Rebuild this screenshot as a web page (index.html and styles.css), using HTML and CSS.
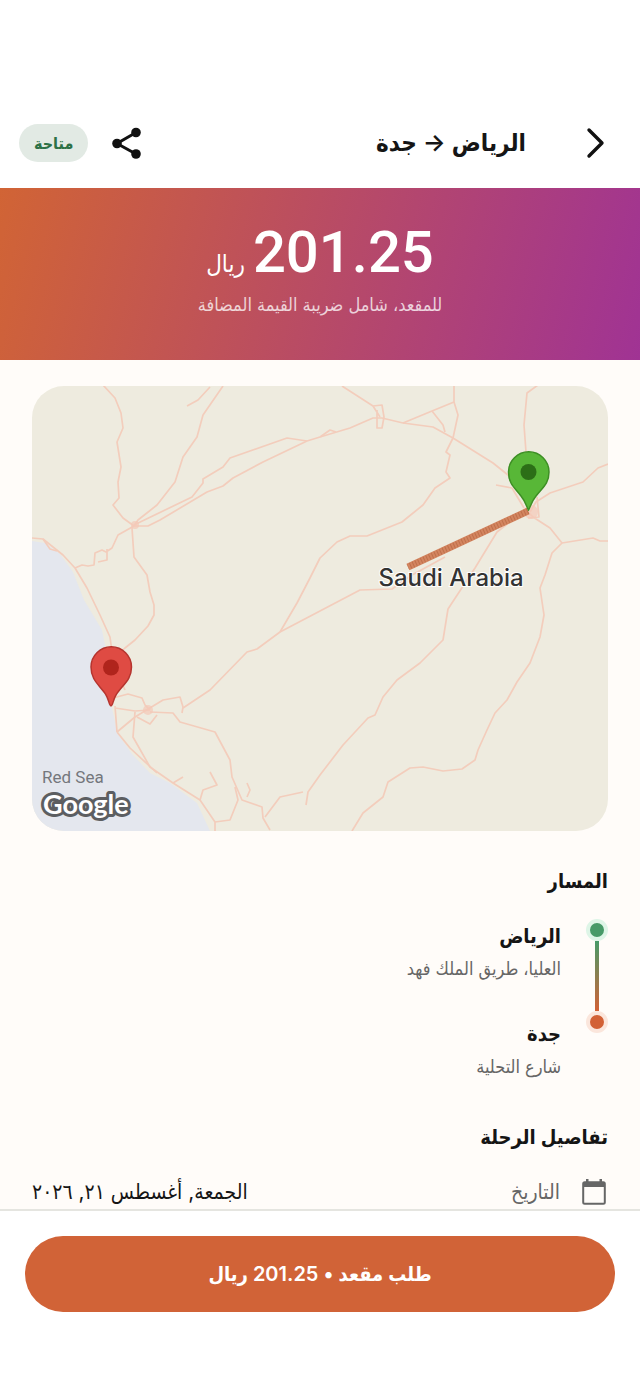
FILE: index.html
```html
<!DOCTYPE html>
<html lang="ar" dir="rtl">

<head>
    <meta charset="utf-8">
    <meta name="viewport" content="width=device-width, initial-scale=1">
    <title>الرياض → جدة</title>
    <link rel="stylesheet" href="styles.css">
</head>

<body>
    <header class="topbar">
        <button class="iconBtn" type="button" aria-label="رجوع">
            <svg width="36" height="36" viewBox="0 0 36 36"><path d="M11 5l13 13-13 13" fill="none" stroke="#111" stroke-width="3.400" stroke-linecap="round" stroke-linejoin="round"/></svg>
        </button>
        <h1 class="title">الرياض → جدة</h1>
        <button class="iconBtn" type="button" aria-label="مشاركة">
            <svg width="36" height="36" viewBox="0 0 36 36">
                <path d="M28 7.500L9 18.500l19 10.500" fill="none" stroke="#111" stroke-width="3"/>
                <circle cx="28" cy="7.500" r="4.800" fill="#111"/>
                <circle cx="9" cy="18.500" r="4.800" fill="#111"/>
                <circle cx="28" cy="29" r="4.800" fill="#111"/>
            </svg>
        </button>
        <span class="badge">متاحة</span>
    </header>

    <main class="content">
        <section class="price">
            <div class="amount"><span class="number">201.25</span><span class="currency">ريال</span></div>
            <div class="priceNote">للمقعد، شامل ضريبة القيمة المضافة</div>
        </section>

        <div class="details">
            <svg class="map" viewBox="32 386 576 445" preserveAspectRatio="xMidYMid slice" direction="ltr">
                <rect x="32" y="386" width="576" height="445" fill="#eeebdf"/>
                <path d="M32 541L45 543 60 554 73 572 84 600 102 630 108 660 110 700 114 717 117 733 132 754 150 773 170 783 197 803 210 831H32z" fill="#e4e7ee"/>

                <!-- roads -->
                <g fill="none" stroke="#f3cdbc" stroke-width="1.700" stroke-linejoin="round">
                    <path d="M103 385L115 398 121 413 123 428 117 442 121 467 118 482 119 498 113 505 123 518 134 526"/>
                    <path d="M210 387L198 400 187 406"/>
                    <path d="M223 386L203 415 197 437 183 457 175 482 157 505 138 520 134 526"/>
                    <path d="M320 437L307 441 287 438 230 458 223 467 203 479 203 483 192 497 134 525"/>
                    <path d="M307 441L263 462 233 478 223 486 207 492 160 520 148 526 134 526"/>
                    <path d="M134 526L118 535 112 548 106 552 102 550 95 553 94 565 88 566 82 565 75 568M107 549V560L98 562"/>
                    <path d="M132 528L134 557 147 575 150 592 154 605 154 615 148 626 135 640 125 648 112 660"/>
                    <path d="M32 538L43 539 63 555 75 568 87 588 100 615 110 637 114 666 125 690"/>
                    <path d="M43 539L50 549 57 551"/>
                    <path d="M113 698L128 694 142 698 145 705 150 710M115 706L117 732M115 708L135 711 150 710"/>
                    <path d="M117 732L135 717 163 700 180 697 183 707 182 713"/>
                    <path d="M183 708L210 690 247 652 257 649 280 632 320 611 360 590 392 589 412 575 445 557"/>
                    <path d="M280 632L297 603 310 578 320 558 337 542 350 536 367 536 402 522 423 505 435 488 450 478 446 472 450 455 446 452 453 438 458 415 454 402 454 385"/>
                    <path d="M320 437L350 428 373 418 382 418 403 423 433 427 453 438 477 453 493 463 508 475 526 500"/>
                    <path d="M320 437L330 430 336 432"/>
                    <path d="M342 386L373 406 380 417M373 406L382 405 384 417 382 428 377 428 377 410"/>
                    <path d="M403 423L432 411 454 402M432 411L443 425 445 432"/>
                    <path d="M538 385L527 393 524 425 526 452M496 485L512 488 524 508"/>
                    <path d="M608 464L598 468 583 482 550 493 536 502 530 512"/>
                    <path d="M526 510L533 517 550 528 562 543 593 538 600 541 608 541M537 497L539 517 528 518"/>
                    <path d="M562 543L552 553 545 575 540 588 544 615 540 637 530 663 517 682 507 700 495 713 487 730 478 750 475 760 462 769 443 771 423 767 410 768 388 782 383 797 363 813 352 831"/>
                    <path d="M515 518L497 532 475 568 448 609 443 640 420 663 397 680 383 697 375 715 368 718 343 745 320 775 308 792 306 805"/>
                    <path d="M303 792L280 797 265 817"/>
                    <path d="M150 712L173 713 180 722 215 732 230 760 232 777 242 800 262 807 263 818 270 830"/>
                    <path d="M135 712L133 737 150 767 173 783 200 800 215 822 215 831"/>
                    <path d="M117 732L130 748 157 773M173 783L183 777M137 717L150 724 157 715"/>
                    <path d="M200 800L203 790 217 785 210 772M215 822L230 820 238 800 235 787M247 783L250 790 247 797"/>
                </g>
                <g fill="#f5c9b8" opacity=".7">
                    <circle cx="135" cy="525" r="4"/>
                    <circle cx="148" cy="710" r="5"/>
                    <circle cx="531" cy="512" r="7"/>
                </g>

                <!-- trip line -->
                <path d="M528 511L408 567" stroke="#d38560" stroke-width="7"/>
                <path d="M528 511L408 567" stroke="#bf704b" stroke-width="6" stroke-dasharray="1 2"/>

                <!-- pins -->
                <g fill="#df4b43" stroke="#b5342e" stroke-width="1.500">
                    <path d="M111 706C109 706 109 698 104 692C98 684 91 679 91 667A20.250 20.250 0 0 1 131.500 667C131.500 679 124 684 118 692C113 698 113 706 111 706z"/>
                    <circle cx="111" cy="667.500" r="8" fill="#b0241c" stroke="none"/>
                </g>
                <g fill="#58b737" stroke="#3d8f24" stroke-width="1.500">
                    <path d="M528.500 510C527 508 526 502 521 496C515 488 508.500 484 508.500 472A20.250 20.250 0 0 1 549 472C549 484 542 488 536 496C531 502 530 508 528.500 510z"/>
                    <circle cx="528.500" cy="472" r="8" fill="#2c6f17" stroke="none"/>
                </g>

                <text class="mapCountry" x="451" y="586" text-anchor="middle">Saudi Arabia</text>
                <text class="mapSea" x="42" y="783">Red Sea</text>
                <text class="mapLogo" x="43" y="814">Google</text>
            </svg>

            <section class="route">
                <h2 class="heading">المسار</h2>
                <div class="routeBody">
                    <div class="track">
                        <span class="dot dotFrom"></span>
                        <span class="line"></span>
                        <span class="dot dotTo"></span>
                    </div>
                    <div class="stops">
                        <div class="stop">
                            <h3 class="city">الرياض</h3>
                            <p class="address">العليا، طريق الملك فهد</p>
                        </div>
                        <div class="stop">
                            <h3 class="city">جدة</h3>
                            <p class="address">شارع التحلية</p>
                        </div>
                    </div>
                </div>
            </section>

            <section class="trip">
                <h2 class="heading">تفاصيل الرحلة</h2>
                <dl class="row">
                    <dt class="rowLabel">
                        <svg width="28" height="28" viewBox="0 0 28 28">
                            <rect x="3.200" y="4.200" width="21.600" height="21.600" rx="1.500" fill="none" stroke="#666" stroke-width="2"/>
                            <path d="M3 4h22v5H3zM6 1h2.500v4H6zM19.500 1H22v4h-2.500z" fill="#666"/>
                        </svg>
                        التاريخ
                    </dt>
                    <dd class="rowValue">الجمعة, أغسطس ٢١, ٢٠٢٦</dd>
                </dl>
            </section>
        </div>
    </main>

    <footer class="bottomBar">
        <button class="bookBtn" type="button">طلب مقعد • 201.25 ريال</button>
    </footer>
</body>

</html>
```
FILE: styles.css
```css
* {
    box-sizing: border-box;
}

html,
body {
    margin: 0;
    padding: 0;
}

body {
    display: flex;
    flex-direction: column;
    height: 100vh;
    background-color: #fff;
    color: #151515;
    font-family: Inter, "DejaVu Sans Condensed", "DejaVu Sans", sans-serif;
}

h1,
h2,
h3,
p,
dl,
dd {
    margin: 0;
}

button {
    border: 0;
    font-family: inherit;
    cursor: pointer;
}

.topbar {
    display: flex;
    flex: none;
    align-items: center;
    height: 188px;
    padding: 98px 26px 0 19px;
}

.iconBtn {
    display: flex;
    padding: 0;
    background: none;
}

.title {
    flex: 1;
    padding-right: 52px;
    font-size: 24px;
    font-weight: 600;
    line-height: 36px;
}

.badge {
    margin-right: 20px;
    padding: 0 15px;
    border-radius: 19px;
    background-color: #e2eae4;
    color: #2d7146;
    font-size: 16px;
    font-weight: 600;
    line-height: 38px;
}

.content {
    flex: 1;
    min-height: 0;
    overflow: hidden;
    background-color: #fffcf9;
}

.price {
    height: 172px;
    padding-top: 26px;
    background: linear-gradient(105deg, #d16435 0%, #a03394 100%);
    color: #fff;
    text-align: center;
}

.amount {
    display: flex;
    justify-content: center;
    align-items: baseline;
    gap: 8px;
    height: 76px;
}

.number {
    font-family: Roboto, sans-serif;
    font-size: 58px;
    font-weight: 500;
    line-height: 76px;
}

.currency {
    font-size: 24px;
    line-height: 36px;
}

.priceNote {
    color: rgba(255, 255, 255, 0.75);
    font-size: 18px;
    line-height: 30px;
}

.details {
    padding: 26px 32px;
}

.map {
    display: block;
    width: 100%;
    height: 445px;
    border-radius: 32px;
}

.mapCountry {
    fill: #333;
    stroke: #fff;
    stroke-width: 2px;
    paint-order: stroke;
    font-size: 24px;
    font-weight: 500;
}

.mapSea {
    fill: #74777c;
    font-family: Roboto, sans-serif;
    font-size: 17px;
}

.mapLogo {
    fill: #fff;
    stroke: #5c5e61;
    stroke-width: 6px;
    stroke-linejoin: round;
    paint-order: stroke;
    font-family: Lato, sans-serif;
    font-size: 27px;
    font-weight: 700;
}

.heading {
    font-size: 20px;
    font-weight: 600;
    line-height: 36px;
}

.route {
    padding-top: 32px;
}

.routeBody {
    display: flex;
    gap: 25px;
    padding-top: 20px;
}

.track {
    display: flex;
    flex-direction: column;
    align-items: center;
    width: 22px;
}

.dot {
    width: 22px;
    height: 22px;
    border: 4px solid #def5e7;
    border-radius: 50%;
}

.dotFrom {
    background-color: #479a68;
}

.dotTo {
    border-color: #fbe6dc;
    background-color: #d26136;
}

.line {
    width: 4px;
    height: 70px;
    background: linear-gradient(#479a68, #d26136);
}

.stop {
    height: 98px;
}

.city {
    font-size: 20px;
    font-weight: 600;
    line-height: 34px;
}

.address {
    color: #666;
    font-size: 18px;
    line-height: 32px;
}

.trip {
    padding-top: 4px;
}

.row {
    display: flex;
    justify-content: space-between;
    padding-top: 20px;
    font-size: 21px;
    line-height: 34px;
}

.rowLabel {
    display: flex;
    align-items: center;
    gap: 20px;
    color: #666;
}

.bottomBar {
    flex: none;
    padding: 25px 25px 80px;
    border-top: 2px solid #e5e5e0;
    background-color: #fff;
}

.bookBtn {
    display: block;
    width: 100%;
    height: 76px;
    border-radius: 38px;
    background-color: #d16337;
    color: #fff;
    font-size: 20px;
    font-weight: 600;
}
```
